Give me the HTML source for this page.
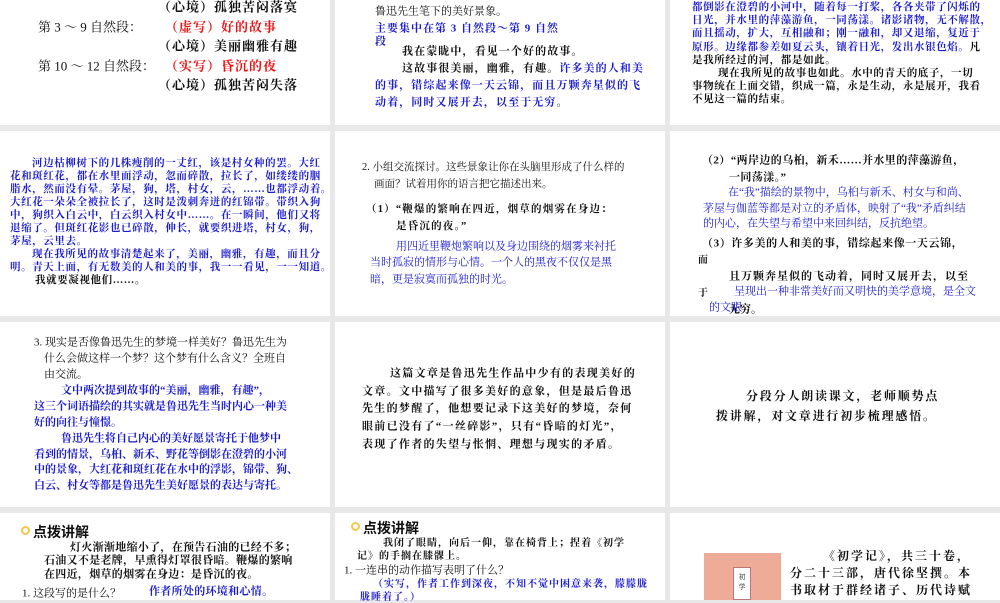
<!DOCTYPE html>
<html><head><meta charset="utf-8"><style>
*{margin:0;padding:0;box-sizing:border-box}
body{width:1000px;height:600px;background:#e8e8e8;position:relative;overflow:hidden;font-family:"Liberation Serif","Noto Serif CJK SC",serif;color:#111}
.s{position:absolute;background:#fff}
.t{position:absolute;white-space:nowrap;line-height:1;transform:translateY(-50%)}
.b{color:#1c1ccf}
.r{color:#f01010}
.k{font-weight:bold}
.h{font-family:"Liberation Sans","Noto Sans CJK SC",sans-serif;font-weight:bold;font-size:14px;color:#111}
.ic{position:absolute;width:9px;height:9px;border:2px solid #f2c94c;border-radius:50%}
</style></head><body>
<div class="s" style="left:0;top:0;width:330px;height:125px"></div>
<div class="s" style="left:335px;top:0;width:330px;height:125px"></div>
<div class="s" style="left:670px;top:0;width:330px;height:125px"></div>
<div class="s" style="left:0;top:131px;width:330px;height:185px"></div>
<div class="s" style="left:335px;top:131px;width:330px;height:185px"></div>
<div class="s" style="left:670px;top:131px;width:330px;height:185px"></div>
<div class="s" style="left:0;top:322px;width:330px;height:185px"></div>
<div class="s" style="left:335px;top:322px;width:330px;height:185px"></div>
<div class="s" style="left:670px;top:322px;width:330px;height:185px"></div>
<div class="s" style="left:0;top:513px;width:330px;height:87px"></div>
<div class="s" style="left:335px;top:513px;width:330px;height:87px"></div>
<div class="s" style="left:670px;top:513px;width:330px;height:87px"></div>

<!-- row1 col1 -->
<div style="font-size:13px">
<div class="t k" style="left:158px;top:7px;letter-spacing:1px">（心境）孤独苦闷落寞</div>
<div class="t" style="left:38px;top:27px">第 3 ～ 9 自然段：</div>
<div class="t r k" style="left:165px;top:27px;letter-spacing:1px">（虚写）好的故事</div>
<div class="t k" style="left:158px;top:46px;letter-spacing:1px">（心境）美丽幽雅有趣</div>
<div class="t" style="left:38px;top:66px">第 10 ～ 12 自然段：</div>
<div class="t r k" style="left:165px;top:66px;letter-spacing:1px">（实写）昏沉的夜</div>
<div class="t k" style="left:158px;top:85px;letter-spacing:1px">（心境）孤独苦闷失落</div>
</div>

<!-- row1 col2 -->
<div style="font-size:11px">
<div class="t" style="left:375px;top:12px">鲁迅先生笔下的美好景象。</div>
<div class="t b k" style="left:375px;top:29px;letter-spacing:1px">主要集中在第 3 自然段～第 9 自然</div>
<div class="t b k" style="left:375px;top:42px">段</div>
<div class="t k" style="left:402px;top:52px;letter-spacing:1.1px">我在蒙眬中，看见一个好的故事。</div>
<div class="t k" style="left:402px;top:69px;letter-spacing:1.1px">这故事很美丽，幽雅，有趣。<span class="b">许多美的人和美</span></div>
<div class="t b k" style="left:375px;top:86px;letter-spacing:1.1px">的事，错综起来像一天云锦，而且万颗奔星似的飞</div>
<div class="t b k" style="left:375px;top:103px;letter-spacing:1.1px">动着，同时又展开去，以至于无穷。</div>
</div>

<!-- row1 col3 -->
<div style="font-size:10.5px;letter-spacing:0.6px">
<div class="t b k" style="left:692px;top:8px">都倒影在澄碧的小河中，随着每一打桨，各各夹带了闪烁的</div>
<div class="t b k" style="left:692px;top:21px">日光，并水里的萍藻游鱼，一同荡漾。诸影诸物，无不解散，</div>
<div class="t b k" style="left:692px;top:34px">而且摇动，扩大，互相融和；刚一融和，却又退缩，复近于</div>
<div class="t b k" style="left:692px;top:48px">原形。边缘都参差如夏云头，镶着日光，发出水银色焰。<span style="color:#111">凡</span></div>
<div class="t k" style="left:692px;top:61px">是我所经过的河，都是如此。</div>
<div class="t k" style="left:718px;top:74px">现在我所见的故事也如此。水中的青天的底子，一切</div>
<div class="t k" style="left:692px;top:87px">事物统在上面交错，织成一篇，永是生动，永是展开，我看</div>
<div class="t k" style="left:692px;top:100px">不见这一篇的结束。</div>
</div>

<!-- row2 col1 -->
<div style="font-size:10.5px;letter-spacing:0.6px">
<div class="t b k" style="left:32px;top:164px">河边枯柳树下的几株瘦削的一丈红，该是村女种的罢。大红</div>
<div class="t b k" style="left:10px;top:177px">花和斑红花，都在水里面浮动，忽而碎散，拉长了，如缕缕的胭</div>
<div class="t b k" style="left:10px;top:190px">脂水，然而没有晕。茅屋，狗，塔，村女，云，……也都浮动着。</div>
<div class="t b k" style="left:10px;top:203px">大红花一朵朵全被拉长了，这时是泼刺奔迸的红锦带。带织入狗</div>
<div class="t b k" style="left:10px;top:216px">中，狗织入白云中，白云织入村女中……。在一瞬间，他们又将</div>
<div class="t b k" style="left:10px;top:229px">退缩了。但斑红花影也已碎散，伸长，就要织进塔，村女，狗，</div>
<div class="t b k" style="left:10px;top:242px">茅屋，云里去。</div>
<div class="t b k" style="left:32px;top:255px">现在我所见的故事清楚起来了，美丽，幽雅，有趣，而且分</div>
<div class="t b k" style="left:10px;top:268px">明。青天上面，有无数美的人和美的事，我一一看见，一一知道。</div>
<div class="t k" style="left:35px;top:281px">我就要凝视他们……。</div>
</div>

<!-- row2 col2 -->
<div style="font-size:10.5px">
<div class="t" style="left:362px;top:168px">2. 小组交流探讨。这些景象让你在头脑里形成了什么样的</div>
<div class="t" style="left:374px;top:185px">画面？试着用你的语言把它描述出来。</div>
<div class="t k" style="left:366px;top:210px;letter-spacing:1.2px">（1）“鞭爆的繁响在四近，烟草的烟雾在身边：</div>
<div class="t k" style="left:396px;top:227px;letter-spacing:1.2px">是昏沉的夜。”</div>
<div class="t b" style="left:396px;top:247px;font-size:11px">用四近里鞭炮繁响以及身边围绕的烟雾来衬托</div>
<div class="t b" style="left:370px;top:263px;font-size:11px">当时孤寂的情形与心情。一个人的黑夜不仅仅是黑</div>
<div class="t b" style="left:370px;top:280px;font-size:11px">暗，更是寂寞而孤独的时光。</div>
</div>

<!-- row2 col3 -->
<div style="font-size:11px">
<div class="t k" style="left:702px;top:161px;letter-spacing:0.4px">（2）“两岸边的乌桕，新禾……并水里的萍藻游鱼，</div>
<div class="t k" style="left:729px;top:178px;letter-spacing:0.4px">一同荡漾。”</div>
<div class="t b" style="left:728px;top:193px">在“我”描绘的景物中，乌桕与新禾、村女与和尚、</div>
<div class="t b" style="left:703px;top:209px">茅屋与伽蓝等都是对立的矛盾体，映射了“我”矛盾纠结</div>
<div class="t b" style="left:703px;top:224px">的内心，在失望与希望中来回纠结，反抗绝望。</div>
<div class="t k" style="left:702px;top:244px;letter-spacing:0.6px">（3）许多美的人和美的事，错综起来像一天云锦，</div>
<div class="t k" style="left:698px;top:261px;font-size:10px">而</div>
<div class="t k" style="left:729px;top:277px;letter-spacing:1px">且万颗奔星似的飞动着，同时又展开去，以至</div>
<div class="t k" style="left:698px;top:294px;font-size:10px">于</div>
<div class="t b" style="left:734px;top:292px">呈现出一种非常美好而又明快的美学意境，是全文</div>
<div class="t k" style="left:729px;top:310px">无穷。</div>
<div class="t b" style="left:709px;top:308px">的文眼</div>
</div>

<!-- row3 col1 -->
<div style="font-size:11px">
<div class="t" style="left:34px;top:343px">3. 现实是否像鲁迅先生的梦境一样美好？鲁迅先生为</div>
<div class="t" style="left:44px;top:359px">什么会做这样一个梦？这个梦有什么含义？全班自</div>
<div class="t" style="left:44px;top:375px">由交流。</div>
<div class="t b k" style="left:61px;top:391px">文中两次提到故事的“美丽，幽雅，有趣”，</div>
<div class="t b k" style="left:34px;top:407px">这三个词语描绘的其实就是鲁迅先生当时内心一种美</div>
<div class="t b k" style="left:34px;top:423px">好的向往与憧憬。</div>
<div class="t b k" style="left:61px;top:439px">鲁迅先生将自己内心的美好愿景寄托于他梦中</div>
<div class="t b k" style="left:34px;top:455px">看到的情景，乌桕、新禾、野花等倒影在澄碧的小河</div>
<div class="t b k" style="left:34px;top:470px">中的景象，大红花和斑红花在水中的浮影，锦带、狗、</div>
<div class="t b k" style="left:34px;top:486px">白云、村女等都是鲁迅先生美好愿景的表达与寄托。</div>
</div>

<!-- row3 col2 -->
<div style="font-size:11px;letter-spacing:1.3px">
<div class="t k" style="left:390px;top:374px">这篇文章是鲁迅先生作品中少有的表现美好的</div>
<div class="t k" style="left:362px;top:392px">文章。文中描写了很多美好的意象，但是最后鲁迅</div>
<div class="t k" style="left:362px;top:409px">先生的梦醒了，他想要记录下这美好的梦境，奈何</div>
<div class="t k" style="left:362px;top:427px">眼前已没有了“一丝碎影”，只有“昏暗的灯光”，</div>
<div class="t k" style="left:362px;top:445px">表现了作者的失望与怅惘、理想与现实的矛盾。</div>
</div>

<!-- row3 col3 -->
<div style="font-size:12px;letter-spacing:1.8px">
<div class="t k" style="left:746px;top:396px">分段分人朗读课文，老师顺势点</div>
<div class="t k" style="left:716px;top:416px">拨讲解，对文章进行初步梳理感悟。</div>
</div>

<!-- row4 col1 -->
<div class="ic" style="left:21px;top:526px"></div>
<div class="t h" style="left:33px;top:532px">点拨讲解</div>
<div style="font-size:11px;letter-spacing:0.3px">
<div class="t k" style="left:70px;top:548px">灯火渐渐地缩小了，在预告石油的已经不多；</div>
<div class="t k" style="left:44px;top:561px">石油又不是老牌，早熏得灯罩很昏暗。鞭爆的繁响</div>
<div class="t k" style="left:44px;top:575px">在四近，烟草的烟雾在身边：是昏沉的夜。</div>
<div class="t" style="left:22px;top:594px;letter-spacing:0">1. 这段写的是什么？</div>
<div class="t b k" style="left:149px;top:592px">作者所处的环境和心情。</div>
</div>

<!-- row4 col2 -->
<div class="ic" style="left:351px;top:522px"></div>
<div class="t h" style="left:363px;top:528px">点拨讲解</div>
<div style="font-size:10px;letter-spacing:1px">
<div class="t k" style="left:383px;top:544px">我闭了眼睛，向后一仰，靠在椅背上；捏着《初学</div>
<div class="t k" style="left:357px;top:557px">记》的手搁在膝髁上。</div>
<div class="t" style="left:344px;top:571px;font-size:11px;letter-spacing:0">1. 一连串的动作描写表明了什么？</div>
<div class="t b k" style="left:373px;top:585px">（实写，作者工作到深夜，不知不觉中困意来袭，朦朦胧</div>
<div class="t b k" style="left:360px;top:598px">胧睡着了。）</div>
</div>

<!-- row4 col3 -->
<div style="position:absolute;left:704px;top:553px;width:77px;height:47px;background:#eeab98"></div>
<div style="position:absolute;left:733px;top:567px;width:18px;height:33px;background:#fff;border:1px solid #b77;font-size:7px;text-align:center;padding-top:4px">初<br>学</div>
<div style="font-size:12px;letter-spacing:2px">
<div class="t k" style="left:823px;top:556px">《初学记》，共三十卷，</div>
<div class="t k" style="left:790px;top:573px">分二十三部，唐代徐坚撰。本</div>
<div class="t k" style="left:790px;top:590px">书取材于群经诸子、历代诗赋</div>
</div>
</body></html>
